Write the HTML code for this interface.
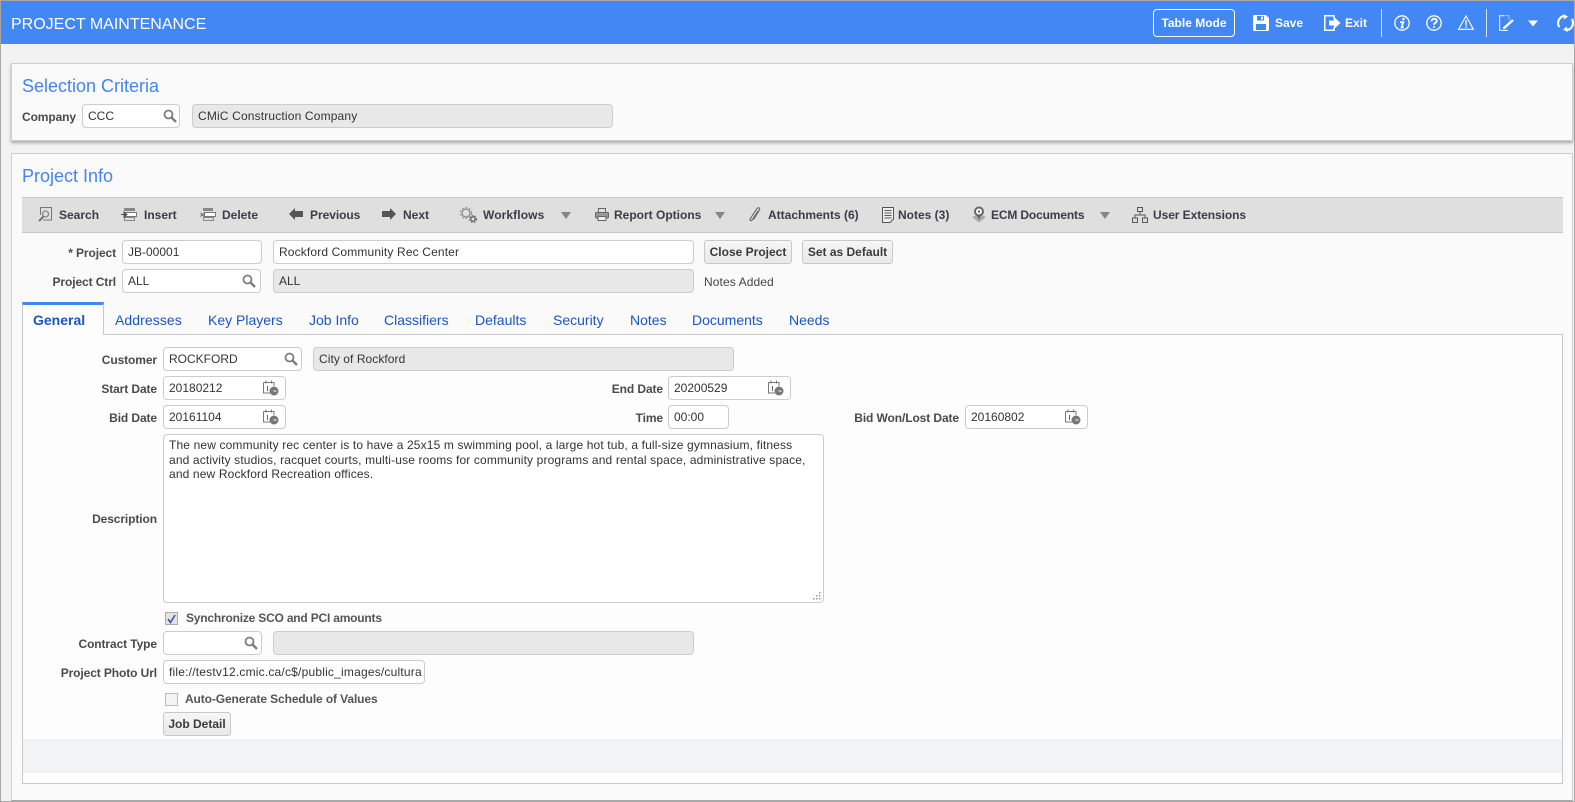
<!DOCTYPE html>
<html><head><meta charset="utf-8">
<style>
html,body{margin:0;padding:0;width:1575px;height:802px;overflow:hidden;background:#f2f2f2;font-family:"Liberation Sans",Arial,sans-serif;font-size:12px;color:#333}
.a,.l,.i,.t,.b,.tb,.tab,svg.s{position:absolute}
.l{font-weight:bold;color:#4a4a4a;text-align:right;line-height:14px;white-space:nowrap;letter-spacing:-.1px}
.i{box-sizing:border-box;height:24px;border:1px solid #ccc;border-radius:4px;background:#fff;line-height:23px;padding-left:5px;color:#333;white-space:nowrap;overflow:hidden}
.i.ro{background:#e8e8e8}
.b{box-sizing:border-box;height:24px;border:1px solid #c8c8c8;border-radius:3px;background:linear-gradient(#f6f6f6,#e8e8e8);font-weight:bold;color:#3a3a3a;text-align:center;line-height:23px;white-space:nowrap}
.t{color:#4285f4;font-size:18px;line-height:22px;white-space:nowrap}
.tb{font-weight:bold;color:#3c3c44;line-height:14px;top:208px;white-space:nowrap}
.tab{color:#1a55c4;font-size:14px;line-height:16px;top:312px;white-space:nowrap}
.hd{position:absolute;color:#fff;font-weight:bold;white-space:nowrap;line-height:14px}
svg.s{overflow:visible}
</style></head><body>
<div class="a" style="left:0;top:0;width:1px;height:802px;background:#a8a8a8"></div>
<div class="a" style="left:0;top:0;width:1575px;height:1px;background:#a8a8a8"></div>
<div class="a" style="left:1574px;top:0;width:1px;height:802px;background:#a8a8a8"></div>
<div class="a" style="left:0;top:801px;width:1575px;height:1px;background:#a8a8a8"></div>
<!-- header -->
<div class="a" style="left:1px;top:1px;width:1573px;height:43px;background:#4387f5"></div>
<div class="a" style="left:11px;top:15px;color:#fff;font-size:16px;line-height:19px">PROJECT MAINTENANCE</div>
<div class="a" style="left:1153px;top:9px;width:82px;height:28px;box-sizing:border-box;border:1px solid #fff;border-radius:4px;color:#fff;font-weight:bold;text-align:center;line-height:27px">Table Mode</div>
<svg class="s" style="left:1253px;top:15px" width="16" height="16" viewBox="0 0 16 16"><path d="M0 1.5Q0 0 1.5 0H13L16 3V14.500Q16 16 14.500 16H1.500Q0 16 0 14.500Z" fill="#fff"/><rect x="4" y="1" width="7" height="4.500" fill="#4387f5"/><rect x="8" y="1.500" width="2" height="3" fill="#fff"/><rect x="3" y="9" width="10" height="6" fill="#4387f5"/></svg>
<div class="hd" style="left:1275px;top:16px">Save</div>
<svg class="s" style="left:1324px;top:15px" width="17" height="16" viewBox="0 0 17 16"><path d="M10 4V.8H.8V15.200H10V12" fill="none" stroke="#fff" stroke-width="1.500"/><path d="M5 5.500H10V2L16.500 8L10 14V10.500H5Z" fill="#fff"/></svg>
<div class="hd" style="left:1345px;top:16px">Exit</div>
<div class="a" style="left:1381px;top:9px;width:1px;height:28px;background:#d5e3fb"></div>
<svg class="s" style="left:1394px;top:15px" width="16" height="16" viewBox="0 0 16 16"><circle cx="8" cy="8" r="7.200" fill="none" stroke="#fff" stroke-width="1.300"/><circle cx="9.500" cy="4" r="1.300" fill="#fff"/><path d="M6 7.200H9.200L7.600 12.500H10" fill="none" stroke="#fff" stroke-width="1.800"/></svg>
<svg class="s" style="left:1426px;top:15px" width="16" height="16" viewBox="0 0 16 16"><circle cx="8" cy="8" r="7.200" fill="none" stroke="#fff" stroke-width="1.300"/><path d="M5.500 6.200C5.500 3 10.700 3 10.700 6C10.700 7.800 8 7.800 8 9.800" fill="none" stroke="#fff" stroke-width="1.900"/><rect x="7.100" y="11" width="1.800" height="1.800" fill="#fff"/></svg>
<svg class="s" style="left:1458px;top:15px" width="16" height="15" viewBox="0 0 16 15"><path d="M8 1L15.400 14.300H.6Z" fill="none" stroke="#fff" stroke-width="1.100"/><rect x="7.400" y="5" width="1.300" height="5.500" fill="#fff"/><rect x="7.400" y="11.300" width="1.300" height="1.500" fill="#fff"/></svg>
<div class="a" style="left:1486px;top:9px;width:1px;height:28px;background:#d5e3fb"></div>
<svg class="s" style="left:1499px;top:15px" width="16" height="16" viewBox="0 0 16 16"><path d="M5 .6H.6V15.400H5" fill="none" stroke="#cfe0fb" stroke-width="1.200"/><path d="M5 .6H10V5" fill="none" stroke="#9fc2f9" stroke-width="1"/><path d="M4.500 13.500L14 5" stroke="#fff" stroke-width="2.400"/><path d="M4 15.400H9" stroke="#fff" stroke-width="1"/></svg>
<svg class="s" style="left:1528px;top:20px" width="10" height="7" viewBox="0 0 10 7"><path d="M0 .5H10L5 6.500Z" fill="#fff"/></svg>
<svg class="s" style="left:1557px;top:15px" width="18" height="16" viewBox="0 0 18 16"><path d="M2.300 12A7.200 7.200 0 0 1 7.500 .9M14.800 4A7.200 7.200 0 0 1 9.500 15.100" fill="none" stroke="#fff" stroke-width="2.100"/><path d="M6.500 -1L11 1.500L7 4.500ZM10.500 17L6 14.500L10 11.500Z" fill="#fff"/></svg>

<!-- selection panel -->
<div class="a" style="left:11px;top:63px;width:1562px;height:78px;box-sizing:border-box;background:#fafafa;border:1px solid #cfcfcf;box-shadow:0 2px 3px rgba(0,0,0,.3)"></div>
<div class="t" style="left:22px;top:75px">Selection Criteria</div>
<div class="l" style="left:0;width:76px;top:110px">Company</div>
<div class="i" style="left:82px;top:104px;width:98px">CCC</div>
<svg class="s" style="left:163px;top:109px" width="14" height="14" viewBox="0 0 14 14"><circle cx="5.500" cy="5.500" r="4" fill="none" stroke="#7d7d7d" stroke-width="1.800"/><path d="M8.500 8.500L13 13" stroke="#7d7d7d" stroke-width="2.400"/></svg>
<div class="i ro" style="left:192px;top:104px;width:421px;letter-spacing:.16px">CMiC Construction Company</div>

<!-- project panel -->
<div class="a" style="left:11px;top:153px;width:1562px;height:648px;box-sizing:border-box;background:#fafafa;border:1px solid #cfcfcf;border-bottom-color:#a8a8a8"></div>
<div class="t" style="left:22px;top:165px">Project Info</div>
<!-- toolbar -->
<div class="a" style="left:22px;top:197px;width:1541px;height:36px;box-sizing:border-box;background:#dfdfdf;border-top:1px solid #c8c8c8;border-bottom:1px solid #c8c8c8"></div>
<svg class="s" style="left:38px;top:207px" width="15" height="15" viewBox="0 0 15 15"><path d="M2.500 .5H13.500V13H5" fill="none" stroke="#777" stroke-width="1"/><path d="M2.500 .5V8" fill="none" stroke="#777"/><circle cx="7.500" cy="7" r="3" fill="none" stroke="#777" stroke-width="1.100"/><path d="M5.500 9.500L1 14" stroke="#666" stroke-width="1.800"/></svg>
<div class="tb" style="left:59px">Search</div>
<svg class="s" style="left:121px;top:207px" width="16" height="15" viewBox="0 0 16 15"><rect x="3" y="1" width="11" height="3" fill="#888"/><rect x="3.500" y="5.500" width="12" height="4" fill="#fff" stroke="#777"/><rect x="3.500" y="10.500" width="10" height="3" fill="none" stroke="#888"/><path d="M0 7.500H4M3 5L6 7.500L3 10Z" fill="#555" stroke="#555"/></svg>
<div class="tb" style="left:144px">Insert</div>
<svg class="s" style="left:200px;top:207px" width="16" height="15" viewBox="0 0 16 15"><rect x="3" y="1" width="10" height="3" fill="#888"/><rect x="4.500" y="5.500" width="11" height="4" fill="#fff" stroke="#777"/><rect x="3.500" y="10.500" width="10" height="3" fill="none" stroke="#888"/><path d="M.5 6L4 9.500M4 6L.5 9.500" stroke="#666"/></svg>
<div class="tb" style="left:222px">Delete</div>
<svg class="s" style="left:289px;top:208px" width="14" height="12" viewBox="0 0 14 12"><path d="M0 6L6 0V3H14V9H6V12Z" fill="#555"/></svg>
<div class="tb" style="left:310px;letter-spacing:-.05px">Previous</div>
<svg class="s" style="left:382px;top:208px" width="14" height="12" viewBox="0 0 14 12"><path d="M14 6L8 0V3H0V9H8V12Z" fill="#555"/></svg>
<div class="tb" style="left:403px">Next</div>
<svg class="s" style="left:460px;top:207px" width="18" height="16" viewBox="0 0 18 16"><circle cx="6" cy="6" r="4" fill="none" stroke="#888" stroke-width="1.200"/><circle cx="6" cy="6" r="5.500" fill="none" stroke="#999" stroke-width="1.300" stroke-dasharray="1.800 1.800"/><circle cx="13" cy="12" r="2.200" fill="none" stroke="#666" stroke-width="1.300"/><circle cx="13" cy="12" r="3.500" fill="none" stroke="#666" stroke-width="1.200" stroke-dasharray="1.500 1.500"/></svg>
<div class="tb" style="left:483px;letter-spacing:.1px">Workflows</div>
<svg class="s" style="left:561px;top:212px" width="10" height="7" viewBox="0 0 10 7"><path d="M0 0H10L5 7Z" fill="#868686"/></svg>
<svg class="s" style="left:595px;top:208px" width="14" height="13" viewBox="0 0 14 13"><path d="M3.500 4V.5H10.500V4" fill="none" stroke="#666"/><rect x=".5" y="4.500" width="13" height="5.500" rx="1" fill="#999" stroke="#666"/><rect x="3" y="8.500" width="8" height="4" fill="#eee" stroke="#666"/></svg>
<div class="tb" style="left:614px">Report Options</div>
<svg class="s" style="left:715px;top:212px" width="10" height="7" viewBox="0 0 10 7"><path d="M0 0H10L5 7Z" fill="#868686"/></svg>
<svg class="s" style="left:749px;top:207px" width="12" height="16" viewBox="0 0 12 16"><path d="M9 4L3.500 12.500C2.200 14.800 .2 13.400 1.500 11.300L7.800 1.800C9.300 -.2 11.600 1 10.400 3.200L4.500 12.600" fill="none" stroke="#666" stroke-width="1.100"/></svg>
<div class="tb" style="left:768px">Attachments (6)</div>
<svg class="s" style="left:882px;top:207px" width="12" height="16" viewBox="0 0 12 16"><path d="M.5 .5H11.500V12L8 15.500H.5Z" fill="#eee" stroke="#555"/><path d="M2.500 3.500H9.500M2.500 6H9.500M2.500 8.500H9.500M2.500 11H9.500" stroke="#555"/></svg>
<div class="tb" style="left:898px">Notes (3)</div>
<svg class="s" style="left:971px;top:206px" width="16" height="17" viewBox="0 0 16 17"><path d="M1 11L8 8L15 11L8 16.500Z" fill="#aaa"/><circle cx="8" cy="5.500" r="4" fill="#fff" stroke="#666" stroke-width="2"/><circle cx="8" cy="5.500" r="1.200" fill="#666"/><path d="M6 9H10L8 14Z" fill="#666"/></svg>
<div class="tb" style="left:991px;letter-spacing:-.15px">ECM Documents</div>
<svg class="s" style="left:1100px;top:212px" width="10" height="7" viewBox="0 0 10 7"><path d="M0 0H10L5 7Z" fill="#868686"/></svg>
<svg class="s" style="left:1132px;top:207px" width="16" height="16" viewBox="0 0 16 16"><rect x="5.500" y=".5" width="5" height="4" fill="none" stroke="#555"/><rect x=".5" y="11" width="5" height="4.500" fill="none" stroke="#555"/><rect x="10.500" y="11" width="5" height="4.500" fill="none" stroke="#555"/><path d="M8 4.500V8M3 11V8H13V11" fill="none" stroke="#555"/></svg>
<div class="tb" style="left:1153px;letter-spacing:-.07px">User Extensions</div>

<!-- project fields -->
<div class="l" style="left:0;width:116px;top:246px">* Project</div>
<div class="i" style="left:122px;top:240px;width:140px">JB-00001</div>
<div class="i" style="left:273px;top:240px;width:421px;letter-spacing:.14px">Rockford Community Rec Center</div>
<div class="b" style="left:704px;top:240px;width:88px">Close Project</div>
<div class="b" style="left:802px;top:240px;width:91px">Set as Default</div>
<div class="l" style="left:0;width:116px;top:275px">Project Ctrl</div>
<div class="i" style="left:122px;top:269px;width:139px">ALL</div>
<svg class="s" style="left:242px;top:274px" width="14" height="14" viewBox="0 0 14 14"><circle cx="5.500" cy="5.500" r="4" fill="none" stroke="#7d7d7d" stroke-width="1.800"/><path d="M8.500 8.500L13 13" stroke="#7d7d7d" stroke-width="2.400"/></svg>
<div class="i ro" style="left:273px;top:269px;width:421px">ALL</div>
<div class="a" style="left:704px;top:275px;line-height:14px;color:#444;letter-spacing:.1px">Notes Added</div>

<!-- tabs -->
<div class="a" style="left:22px;top:334px;width:1541px;height:450px;box-sizing:border-box;background:#fdfdfd;border:1px solid #c8c8c8"></div>
<div class="a" style="left:22px;top:302px;width:82px;height:33px;box-sizing:border-box;background:#fdfdfd;border:1px solid #c8c8c8;border-top:3px solid #4285f4;border-bottom:0"></div>
<div class="tab" style="left:33px;font-weight:bold">General</div>
<div class="tab" style="left:115px;letter-spacing:.08px">Addresses</div>
<div class="tab" style="left:208px">Key Players</div>
<div class="tab" style="left:309px">Job Info</div>
<div class="tab" style="left:384px">Classifiers</div>
<div class="tab" style="left:475px">Defaults</div>
<div class="tab" style="left:553px">Security</div>
<div class="tab" style="left:630px">Notes</div>
<div class="tab" style="left:692px">Documents</div>
<div class="tab" style="left:789px">Needs</div>

<!-- general -->
<div class="l" style="left:0;width:157px;top:353px">Customer</div>
<div class="i" style="left:163px;top:347px;width:139px">ROCKFORD</div>
<svg class="s" style="left:284px;top:352px" width="14" height="14" viewBox="0 0 14 14"><circle cx="5.500" cy="5.500" r="4" fill="none" stroke="#7d7d7d" stroke-width="1.800"/><path d="M8.500 8.500L13 13" stroke="#7d7d7d" stroke-width="2.400"/></svg>
<div class="i ro" style="left:313px;top:347px;width:421px;letter-spacing:.06px">City of Rockford</div>

<div class="l" style="left:0;width:157px;top:382px">Start Date</div>
<div class="i" style="left:163px;top:376px;width:123px">20180212</div>
<svg class="s" style="left:263px;top:380px" width="16" height="16" viewBox="0 0 16 16"><path d="M.5 2.500H11V6M.5 2.500V13H7" fill="none" stroke="#777"/><path d="M3 .5V3.500M8.500 .5V3.500" stroke="#777"/><path d="M4.500 6V11" stroke="#666"/><circle cx="11" cy="11" r="4.500" fill="#777"/><path d="M10.500 11H13.500" stroke="#fff"/></svg>
<div class="l" style="left:500px;width:163px;top:382px">End Date</div>
<div class="i" style="left:668px;top:376px;width:123px">20200529</div>
<svg class="s" style="left:768px;top:380px" width="16" height="16" viewBox="0 0 16 16"><path d="M.5 2.500H11V6M.5 2.500V13H7" fill="none" stroke="#777"/><path d="M3 .5V3.500M8.500 .5V3.500" stroke="#777"/><path d="M4.500 6V11" stroke="#666"/><circle cx="11" cy="11" r="4.500" fill="#777"/><path d="M10.500 11H13.500" stroke="#fff"/></svg>

<div class="l" style="left:0;width:157px;top:411px">Bid Date</div>
<div class="i" style="left:163px;top:405px;width:123px">20161104</div>
<svg class="s" style="left:263px;top:409px" width="16" height="16" viewBox="0 0 16 16"><path d="M.5 2.500H11V6M.5 2.500V13H7" fill="none" stroke="#777"/><path d="M3 .5V3.500M8.500 .5V3.500" stroke="#777"/><path d="M4.500 6V11" stroke="#666"/><circle cx="11" cy="11" r="4.500" fill="#777"/><path d="M10.500 11H13.500" stroke="#fff"/></svg>
<div class="l" style="left:500px;width:163px;top:411px">Time</div>
<div class="i" style="left:668px;top:405px;width:61px">00:00</div>
<div class="l" style="left:800px;width:159px;top:411px">Bid Won/Lost Date</div>
<div class="i" style="left:965px;top:405px;width:123px">20160802</div>
<svg class="s" style="left:1065px;top:409px" width="16" height="16" viewBox="0 0 16 16"><path d="M.5 2.500H11V6M.5 2.500V13H7" fill="none" stroke="#777"/><path d="M3 .5V3.500M8.500 .5V3.500" stroke="#777"/><path d="M4.500 6V11" stroke="#666"/><circle cx="11" cy="11" r="4.500" fill="#777"/><path d="M10.500 11H13.500" stroke="#fff"/></svg>

<div class="l" style="left:0;width:157px;top:512px">Description</div>
<div class="a" style="left:163px;top:434px;width:661px;height:169px;box-sizing:border-box;background:#fff;border:1px solid #ccc;border-radius:4px;padding:3px 5px;line-height:14.500px;color:#333;white-space:nowrap;letter-spacing:.14px">The new community rec center is to have a 25x15 m swimming pool, a large hot tub, a full-size gymnasium, fitness<br>and activity studios, racquet courts, multi-use rooms for community programs and rental space, administrative space,<br>and new Rockford Recreation offices.</div>
<svg class="s" style="left:812px;top:591px" width="10" height="10" viewBox="0 0 10 10"><g fill="#999"><rect x="7" y="1" width="1.500" height="1.500"/><rect x="4" y="4" width="1.500" height="1.500"/><rect x="7" y="4" width="1.500" height="1.500"/><rect x="1" y="7" width="1.500" height="1.500"/><rect x="4" y="7" width="1.500" height="1.500"/><rect x="7" y="7" width="1.500" height="1.500"/></g></svg>

<div class="a" style="left:165px;top:612px;width:13px;height:13px;box-sizing:border-box;border:1px solid #aaa;background:#e4e4e4"></div>
<svg class="s" style="left:167px;top:614px" width="9" height="10" viewBox="0 0 9 10"><path d="M1 5L3.500 8.500L8 1" fill="none" stroke="#4a56a8" stroke-width="1.700"/></svg>
<div class="l" style="left:186px;top:611px;color:#555;letter-spacing:-.2px">Synchronize SCO and PCI amounts</div>

<div class="l" style="left:0;width:157px;top:637px">Contract Type</div>
<div class="i" style="left:163px;top:631px;width:99px"></div>
<svg class="s" style="left:244px;top:636px" width="14" height="14" viewBox="0 0 14 14"><circle cx="5.500" cy="5.500" r="4" fill="none" stroke="#7d7d7d" stroke-width="1.800"/><path d="M8.500 8.500L13 13" stroke="#7d7d7d" stroke-width="2.400"/></svg>
<div class="i ro" style="left:273px;top:631px;width:421px"></div>

<div class="l" style="left:0;width:157px;top:666px">Project Photo Url</div>
<div class="i" style="left:163px;top:660px;width:262px;letter-spacing:.2px">file://testv12.cmic.ca/c$/public_images/cultura</div>

<div class="a" style="left:165px;top:693px;width:13px;height:13px;box-sizing:border-box;border:1px solid #bbb;background:#f4f4f4"></div>
<div class="l" style="left:185px;top:692px;color:#555;letter-spacing:-.11px">Auto-Generate Schedule of Values</div>
<div class="b" style="left:163px;top:712px;width:68px">Job Detail</div>

<div class="a" style="left:23px;top:739px;width:1539px;height:34px;background:#f2f3f5"></div>
</body></html>
